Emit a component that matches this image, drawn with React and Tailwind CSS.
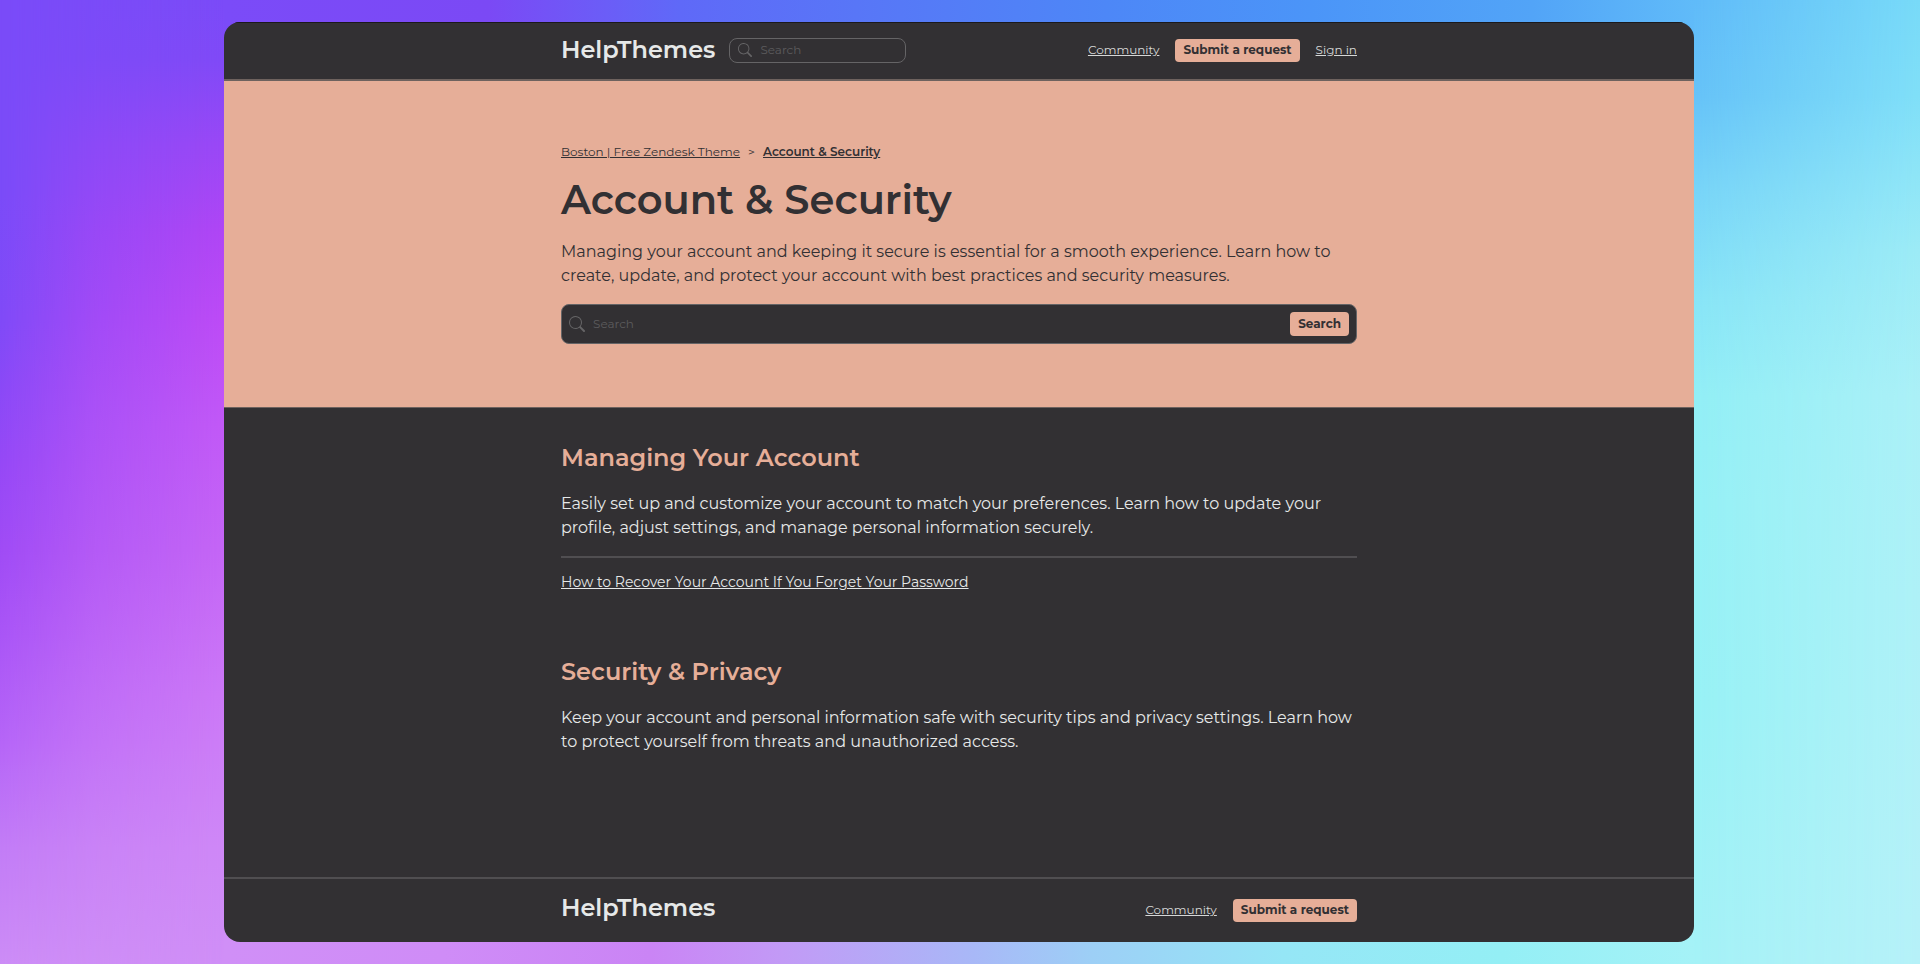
import { BsSearch } from "react-icons/bs"

const sections = [
    {
        title: "Managing Your Account",
        text: "Easily set up and customize your account to match your preferences. Learn how to update your profile, adjust settings, and manage personal information securely.",
        articles: ["How to Recover Your Account If You Forget Your Password"],
    },
    {
        title: "Security & Privacy",
        text: "Keep your account and personal information safe with security tips and privacy settings. Learn how to protect yourself from threats and unauthorized access.",
        articles: [],
    },
]

function Container({ className = "", children }) {
    return <div className={`mx-auto w-full max-w-[796px] ${className}`}>{children}</div>
}

function Logo() {
    return <a href="#" className="text-2xl leading-8 font-semibold text-[#e6e8e8]">HelpThemes</a>
}

function SubmitButton() {
    return (
        <button className="h-[23px] rounded bg-[#e6ae98] px-2 text-xs font-bold text-[#323033]">
            Submit a request
        </button>
    )
}

export default function App() {
    return (
        <div className="flex min-h-screen font-['Montserrat','Inter',sans-serif]">

            {/* left side of the backdrop, blue to pink */}
            <div aria-hidden="true" className="flex w-[224px] shrink-0 bg-[linear-gradient(to_bottom,#7b4bf8_0%,#804af7_6%,#9a48f6_15%,#b046f5_24%,#bd4bf6_33%,#c259f7_44%,#c566f6_57%,#cc78f7_72%,#cf88f7_88%,#d08ff7_100%)]">
                <div className="grow bg-[linear-gradient(to_bottom,#7a4bf8_0%,#7a4bf8_20%,#7f4af7_33%,#9548f6_48%,#9f4bf5_57%,#a955f6_66%,#b565f7_77%,#c27cf6_88%,#cc8cf6_100%)] [mask-image:linear-gradient(to_right,#000,rgba(0,0,0,0.45)_42%,transparent)]" />
            </div>

            <div className="flex grow flex-col bg-[linear-gradient(to_right,#7b4bf8_0%,#7b49f5_18%,#6b5df7_26%,#5f69f8_31%,#5876f7_43%,#4d87f7_60%,#4b95f8_74%,#52a4f7_89%,#60bbf9_100%),linear-gradient(to_right,#d08ff7_0%,#cf8cf7_15%,#ca84f5_29%,#c29af6_38%,#a8b8f7_51%,#9dcff6_59%,#95e6f6_72%,#94eff5_87%,#a5f2f7_100%)] bg-size-[100%_50%] bg-position-[top,bottom] bg-no-repeat py-[22px]">
                <div className="flex grow flex-col overflow-hidden rounded-2xl bg-[#323033]">
                    <header className="border-t border-b-2 border-t-[#1b191c] border-b-[#6e625e] pt-[11px] pb-[13px]">
                        <Container className="flex items-center gap-[14px]">
                            <Logo />
                            <label className="flex h-[25px] w-[177px] items-center gap-2 rounded-lg border border-[#656466] px-2 text-[#656466]">
                                <BsSearch size={14} className="shrink-0" />
                                <input
                                    type="search"
                                    aria-label="Search"
                                    placeholder="Search"
                                    className="w-full min-w-0 text-xs outline-none placeholder:text-[#5c5b5d]"
                                />
                            </label>
                            <nav className="ml-auto flex items-center gap-4 text-xs text-[#d6d8d8]">
                                <a href="#" className="underline">Community</a>
                                <SubmitButton />
                                <a href="#" className="underline">Sign in</a>
                            </nav>
                        </Container>
                    </header>

                    {/* hero */}
                    <div className="border-b border-[#6e625e] bg-[#e6ae98] py-[63px] text-[#323033]">
                        <Container>
                            <nav className="flex gap-2 text-xs">
                                <a href="#" className="underline">Boston | Free Zendesk Theme</a>
                                <span>&gt;</span>
                                <a href="#" className="font-semibold underline">Account &amp; Security</a>
                            </nav>
                            <h1 className="mt-4 text-[40px] leading-12 font-semibold">Account &amp; Security</h1>
                            <p className="mt-4 text-base">
                                Managing your account and keeping it secure is essential for a smooth experience. Learn how to create, update, and protect your account with best practices and security measures.
                            </p>
                            <form className="mt-4 flex h-10 items-center gap-2 rounded-lg border border-[#656466] bg-[#323033] px-[7px] text-[#656466]">
                                <BsSearch size={16} />
                                <input
                                    type="search"
                                    aria-label="Search articles"
                                    placeholder="Search"
                                    className="grow text-xs outline-none placeholder:text-[#5c5b5d]"
                                />
                                <button type="button" className="h-6 rounded bg-[#e6ae98] px-2 text-xs font-bold text-[#323033]">Search</button>
                            </form>
                        </Container>
                    </div>

                    <main className="grow">
                        <Container className="py-8">
                            {sections.map((s) => (
                                <section key={s.title} className="mb-15">
                                    <h2 className="text-2xl leading-9 font-semibold text-[#e6ae98]">{s.title}</h2>
                                    <p className="mt-4 text-base text-[#e6e8e8]">{s.text}</p>
                                    {s.articles.length > 0 && (
                                        <ul className="mt-4 border-t-2 border-[#504e51] pt-3">
                                            {s.articles.map((a) => (
                                                <li key={a} className="text-sm leading-6">
                                                    <a href="#" className="text-[#e6e8e8] underline">{a}</a>
                                                </li>
                                            ))}
                                        </ul>
                                    )}
                                </section>
                            ))}
                        </Container>
                    </main>

                    <footer className="border-t-2 border-[#504e51] pt-[13px] pb-[18px]">
                        <Container className="flex items-end justify-between">
                            <Logo />
                            <nav className="flex h-7 items-center gap-4 text-xs text-[#d6d8d8]">
                                <a href="#" className="underline">Community</a>
                                <SubmitButton />
                            </nav>
                        </Container>
                    </footer>
                </div>
            </div>

            {/* right side of the backdrop, sky to cyan */}
            <div aria-hidden="true" className="flex w-[226px] shrink-0 bg-[linear-gradient(to_bottom,#60bbf9_0%,#66c3f8_10%,#78d5f8_20%,#88e5f7_31%,#92eff6_41%,#96f1f6_52%,#98f2f6_73%,#a5f2f7_100%)]">
                <div className="grow bg-[linear-gradient(to_bottom,#78daf8_0%,#80dff8_10%,#9cebf6_26%,#abf0f7_41%,#aef1f7_62%,#b6f1f8_100%)] [mask-image:linear-gradient(to_left,#000,transparent)]" />
            </div>
        </div>
    )
}
